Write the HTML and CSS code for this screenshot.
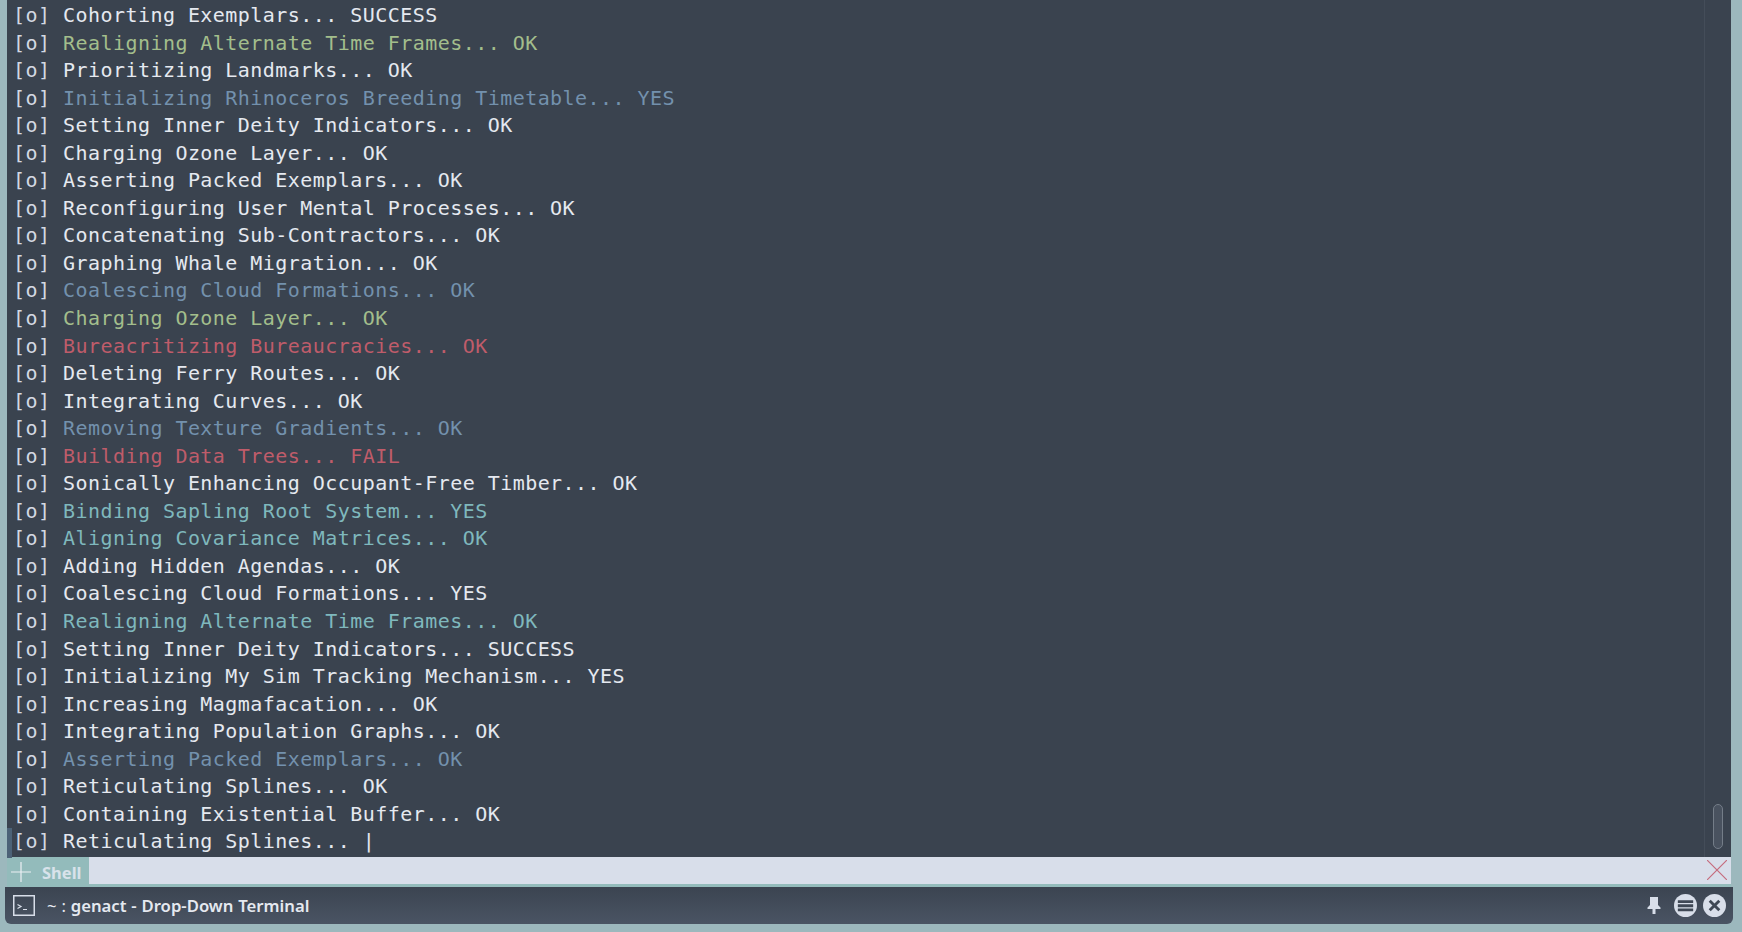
FILE: index.html
```html
<!DOCTYPE html>
<html lang="en">
<head>
<meta charset="utf-8">
<title>~ : genact - Drop-Down Terminal</title>
<link rel="stylesheet" href="styles.css">
</head>
<body>
<div class="window">
  <div class="terminal">
    <div class="output">
      <div class="line"><span class="pre">[o] </span>Cohorting Exemplars... SUCCESS</div>
      <div class="line"><span class="pre">[o] </span><span class="green">Realigning Alternate Time Frames... OK</span></div>
      <div class="line"><span class="pre">[o] </span>Prioritizing Landmarks... OK</div>
      <div class="line"><span class="pre">[o] </span><span class="blue">Initializing Rhinoceros Breeding Timetable... YES</span></div>
      <div class="line"><span class="pre">[o] </span>Setting Inner Deity Indicators... OK</div>
      <div class="line"><span class="pre">[o] </span>Charging Ozone Layer... OK</div>
      <div class="line"><span class="pre">[o] </span>Asserting Packed Exemplars... OK</div>
      <div class="line"><span class="pre">[o] </span>Reconfiguring User Mental Processes... OK</div>
      <div class="line"><span class="pre">[o] </span>Concatenating Sub-Contractors... OK</div>
      <div class="line"><span class="pre">[o] </span>Graphing Whale Migration... OK</div>
      <div class="line"><span class="pre">[o] </span><span class="blue">Coalescing Cloud Formations... OK</span></div>
      <div class="line"><span class="pre">[o] </span><span class="green">Charging Ozone Layer... OK</span></div>
      <div class="line"><span class="pre">[o] </span><span class="red">Bureacritizing Bureaucracies... OK</span></div>
      <div class="line"><span class="pre">[o] </span>Deleting Ferry Routes... OK</div>
      <div class="line"><span class="pre">[o] </span>Integrating Curves... OK</div>
      <div class="line"><span class="pre">[o] </span><span class="blue">Removing Texture Gradients... OK</span></div>
      <div class="line"><span class="pre">[o] </span><span class="red">Building Data Trees... FAIL</span></div>
      <div class="line"><span class="pre">[o] </span>Sonically Enhancing Occupant-Free Timber... OK</div>
      <div class="line"><span class="pre">[o] </span><span class="cyan">Binding Sapling Root System... YES</span></div>
      <div class="line"><span class="pre">[o] </span><span class="cyan">Aligning Covariance Matrices... OK</span></div>
      <div class="line"><span class="pre">[o] </span>Adding Hidden Agendas... OK</div>
      <div class="line"><span class="pre">[o] </span>Coalescing Cloud Formations... YES</div>
      <div class="line"><span class="pre">[o] </span><span class="cyan">Realigning Alternate Time Frames... OK</span></div>
      <div class="line"><span class="pre">[o] </span>Setting Inner Deity Indicators... SUCCESS</div>
      <div class="line"><span class="pre">[o] </span>Initializing My Sim Tracking Mechanism... YES</div>
      <div class="line"><span class="pre">[o] </span>Increasing Magmafacation... OK</div>
      <div class="line"><span class="pre">[o] </span>Integrating Population Graphs... OK</div>
      <div class="line"><span class="pre">[o] </span><span class="blue">Asserting Packed Exemplars... OK</span></div>
      <div class="line"><span class="pre">[o] </span>Reticulating Splines... OK</div>
      <div class="line"><span class="pre">[o] </span>Containing Existential Buffer... OK</div>
      <div class="line current"><span class="pre">[o] </span>Reticulating Splines... |</div>
    </div>
    <div class="scrollbar"><div class="thumb"></div></div>
  </div>
  <div class="tabbar">
    <div class="tab">
      <svg class="plus" viewBox="0 0 20 20"><path d="M10 0v20M0 10h20"/></svg>
      <span>Shell</span>
    </div>
    <svg class="close-tab" viewBox="0 0 20 20"><path d="M0 0l20 20M20 0L0 20"/></svg>
  </div>
  <div class="titlebar">
    <svg class="app-icon" viewBox="0 0 22 21"><rect x="0.75" y="0.75" width="20.5" height="19.5"/><path d="M4.500 9.500l3.500 2-3.500 2M10 14.500h4"/></svg>
    <div class="title"><span class="cwd">~ : </span>genact - Drop-Down Terminal</div>
    <div class="buttons">
      <svg class="pin" viewBox="0 0 14 17"><path d="M3 0h8v8l2.500 2.500v1.500H8.500v5h-3v-5H0.500v-1.500L3 8z"/></svg>
      <svg class="round" viewBox="0 0 24 24"><circle cx="12" cy="12" r="12"/><path class="dark" d="M4 6.500h16v3H4zM4 10.750h16v3H4zM4 15h16v3H4z"/></svg>
      <svg class="round" viewBox="0 0 24 24"><circle cx="12" cy="12" r="12"/><path class="x" d="M7 7l10 10M17 7L7 17"/></svg>
    </div>
  </div>
</div>
</body>
</html>
```
FILE: styles.css
```css
* { box-sizing: border-box; }
html, body { margin: 0; height: 100%; }
body {
  width: 1742px;
  height: 932px;
  overflow: hidden;
  background: #9cb8bd;
  font-family: "Noto Sans", sans-serif;
}
.window {
  display: flex;
  flex-direction: column;
  height: 924px;
  margin-left: 5px;
  width: 1728px;
}
.terminal {
  display: flex;
  height: 857px;
  margin-left: 2px;
  margin-right: 2px;
  background: #3a434f;
}
.output {
  flex: 1;
  padding: 2px 0 0 6px;
  font-family: "DejaVu Sans Mono", monospace;
  font-size: 20px;
  letter-spacing: 0.45px;
  color: #e5e9f0;
}
.line { height: 27.55px; line-height: 27.55px; white-space: pre; }
.current { position: relative; }
.current::before {
  content: "";
  position: absolute;
  left: -6px;
  top: 0;
  width: 5px;
  height: 30px;
  background: #4c6277;
}
.pre { color: #d3d9e2; }
.green { color: #a3be8c; }
.blue { color: #7391ad; }
.red { color: #bf5c6a; }
.cyan { color: #7fb8bd; }
.scrollbar {
  width: 27px;
  display: flex;
  align-items: flex-end;
  justify-content: center;
  padding-bottom: 8px;
  border-left: 1px solid #444d59;
}
.thumb {
  width: 10px;
  height: 45px;
  border-radius: 5px;
  background: #49525f;
  border: 1px solid #747d88;
}
.tabbar {
  display: flex;
  justify-content: space-between;
  height: 30px;
  margin-left: 2px;
  margin-right: 2px;
  background: #d8deea;
  border-bottom: 3px solid #93bbbb;
}
.tab {
  display: flex;
  align-items: center;
  height: 27px;
  width: 82px;
  gap: 11px;
  padding: 3px 0 0 4px;
  background: #93bbbb;
  color: #d8e2ea;
  font-size: 16.500px;
  font-weight: 700;
}
.plus { width: 20px; height: 20px; flex: none; }
.plus path { stroke: #eceff4; stroke-width: 1.200; fill: none; }
.close-tab { width: 20px; height: 20px; margin: 3px 4px 0 0; }
.close-tab path { stroke: #c56c7e; stroke-width: 1.200; fill: none; }
.titlebar {
  display: flex;
  align-items: center;
  height: 37px;
  padding: 0 7px 0 8px;
  width: 1728px;
  border-radius: 0 0 6px 6px;
  background: linear-gradient(#3b4451, #4a5463);
  color: #e5e9f0;
}
.app-icon { width: 22px; height: 21px; flex: none; }
.app-icon rect { fill: none; stroke: #d8dee9; stroke-width: 1.500; }
.app-icon path { fill: none; stroke: #d8dee9; stroke-width: 1.200; }
.title {
  flex: 1;
  margin-left: 12px;
  font-size: 16.700px;
  font-weight: 600;
  word-spacing: 0.5px;
}
.cwd { font-weight: 400; }
.buttons { display: flex; align-items: center; gap: 6px; }
.pin { width: 14px; height: 17px; margin-right: 7px; }
.pin path { fill: #d8dee9; }
.round { width: 23px; height: 23px; }
.round circle { fill: #d8dee9; }
.round .dark { fill: #3f4855; }
.round .x { stroke: #3f4855; stroke-width: 3; fill: none; }
```
